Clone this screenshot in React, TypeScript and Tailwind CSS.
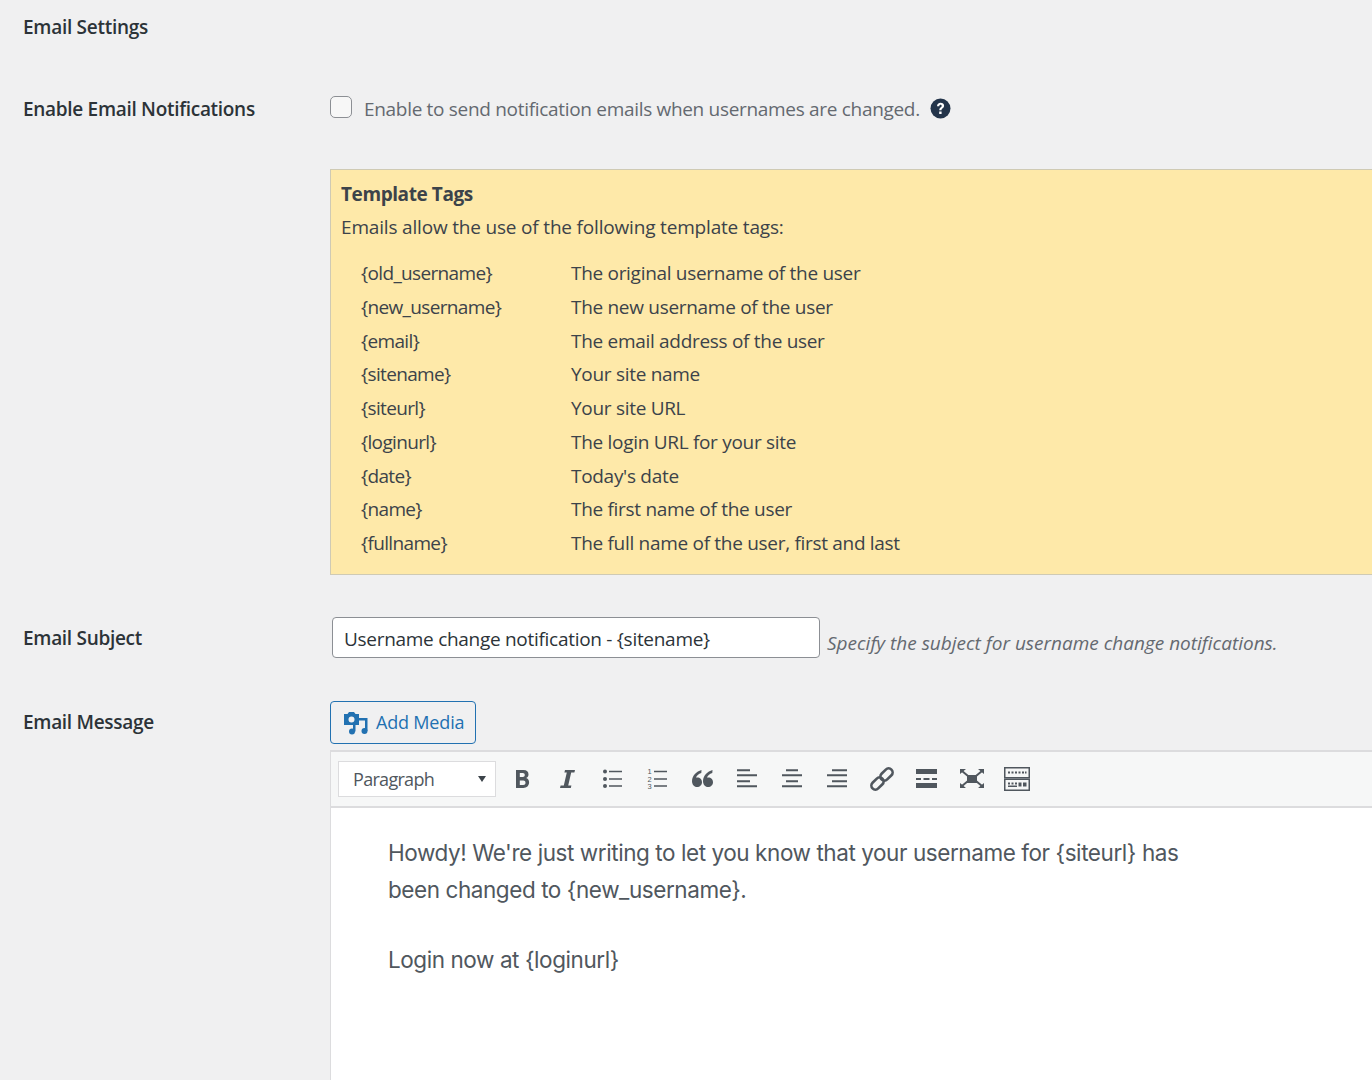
import React from 'react';

const tags = [
    ['{old_username}', 'The original username of the user'],
    ['{new_username}', 'The new username of the user'],
    ['{email}', 'The email address of the user'],
    ['{sitename}', 'Your site name'],
    ['{siteurl}', 'Your site URL'],
    ['{loginurl}', 'The login URL for your site'],
    ['{date}', "Today's date"],
    ['{name}', 'The first name of the user'],
    ['{fullname}', 'The full name of the user, first and last'],
];

const Icon = ({ children }: { children: React.ReactNode }) => (
    <div className="w-[45px] h-[36px] flex items-center justify-center">
        <svg width="26" height="26" viewBox="0 0 26 26" fill="#50575e">
            {children}
        </svg>
    </div>
);

const Row = ({ label, children, className }: { label: string; children: React.ReactNode; className?: string }) => (
    <div className={`flex ${className ?? ''}`}>
        <div className="w-[307px] shrink-0 text-[19px] font-semibold text-[#2c3338] tracking-[-0.3px]">{label}</div>
        <div className="flex-1 min-w-0">{children}</div>
    </div>
);

export default function App() {
    return (
        <div className="w-[1372px] h-[1080px] overflow-hidden bg-[#f0f0f1] pl-[23px] font-['Open_Sans',sans-serif] text-[#3c434a]">
            <div className="h-[41px] pt-[12px] text-[19px] leading-[30px] font-semibold text-[#2c3338] tracking-[-0.28px]">Email Settings</div>

            <Row label="Enable Email Notifications" className="mt-[53px] h-[86px] leading-[30px]">
                <div className="flex items-center h-[30px]">
                    <div className="w-[22px] h-[22px] rounded-[5px] border border-[#8c8f94] bg-[#f7f7f7] -mt-[4px]" />
                    <span className="ml-[12px] text-[19px] text-[#646970] tracking-[-0.31px]">Enable to send notification emails when usernames are changed.</span>
                    <svg className="ml-[10px] -mt-[2px]" width="21" height="21" viewBox="0 0 21 21">
                        <circle cx="10.5" cy="10.5" r="10" fill="#23344a" />
                        <path d="M7 8.2c0-2.2 1.6-3.4 3.6-3.4s3.5 1.2 3.5 3c0 2.6-2.6 2.4-2.6 4.4H9.3c0-3 2.4-2.9 2.4-4.3 0-.7-.5-1.1-1.2-1.1-.8 0-1.2.6-1.2 1.4zM9.2 13.6h2.4V16H9.2z" fill="#fff" />
                    </svg>
                </div>
            </Row>

            <Row label="" className="h-[407px]">
                <div className="h-[406px] bg-[#fee9a9] border border-[#cfcab4] border-r-0 pl-[10px] pt-[8px] -mt-[11px] text-[#3c434a]">
                    <div className="text-[19px] leading-[32px] font-bold tracking-[-0.42px]">Template Tags</div>
                    <div className="text-[19px] leading-[34px] tracking-[-0.18px]">Emails allow the use of the following template tags:</div>
                    <div className="mt-[12.4px] pl-[20px]">
                        {tags.map(([tag, desc]) => (
                            <div key={tag} className="flex h-[33.75px] items-center text-[19px] tracking-[-0.3px]">
                                <div className="w-[210px] shrink-0 tracking-[-0.65px]">{tag}</div>
                                <div>{desc}</div>
                            </div>
                        ))}
                    </div>
                </div>
            </Row>

            <Row label="Email Subject" className="h-[77px] leading-[30px] mt-[36px]">
                <div className="flex items-center -mt-[6px]">
                    <div className="w-[488px] h-[41px] ml-[2px] rounded-[4px] border border-[#8c8f94] bg-white pl-[11px] pt-[2px] flex items-center text-[19px] text-[#2c3338] tracking-[-0.29px]">
                        Username change notification - {'{sitename}'}
                    </div>
                    <span className="ml-[7px] mt-[10px] text-[19px] italic text-[#646970]">Specify the subject for username change notifications.</span>
                </div>
            </Row>

            <Row label="Email Message" className="leading-[44px]">
                <div className="mt-[1px] w-[146px] h-[43px] rounded-[4px] border border-[#2271b1] flex items-center pl-[13px] text-[18px] text-[#2271b1] tracking-[-0.18px]">
                    <svg width="24" height="24" viewBox="0 0 24 24" fill="#2271b1">
                        <path fillRule="evenodd" d="M0 3h3.500L5 1h5l1.500 2H15v11H0zm7.500 2.500a3 3 0 100 6 3 3 0 000-6z" />
                        <path d="M15 7h8.500v13h-2.500V9.500h-6z" />
                        <circle cx="20.500" cy="20" r="3" />
                        <circle cx="8" cy="20.500" r="3" />
                        <path d="M9 14h2.500v6.500H9z" />
                    </svg>
                    <span className="ml-[8px] -mt-[2px]">Add Media</span>
                </div>
                <div className="mt-[6px] h-[400px] border-l border-[#dcdcde]">
                    <div className="h-[58px] border-y-[2px] border-[#dcdcde] bg-[#f6f7f7] pl-[7px] flex items-center">
                        <div className="w-[158px] h-[36px] border border-[#dcdcde] bg-white pl-[14px] pr-[9px] flex items-center justify-between text-[18px] text-[#50575e] tracking-[-0.7px]">
                            <span>Paragraph</span>
                            <span className="w-0 h-0 border-x-[4px] border-x-transparent border-t-[6px] border-t-[#3c434a]" />
                        </div>
                        <div className="ml-[3px] flex items-center">
                            {/* bold */}
                            <Icon><path fillRule="evenodd" d="M7 4h7.500c3.400 0 5 1.800 5 4.400 0 1.800-1 3.100-2.400 3.700 1.800.5 3 2 3 4.200 0 3.400-2.400 5.700-5.800 5.700H7zm3.800 3v4h3c1.200 0 2-.8 2-2s-.8-2-2-2zm0 7.500V19h3.500c1.300 0 2.200-.9 2.200-2.250s-.9-2.250-2.200-2.250z" /></Icon>
                            {/* italic */}
                            <Icon><path d="M11 4h10l-.6 2.500h-3.200l-3 13h3.200l-.6 2.500H6l.6-2.500h3.200l3-13H10.400z" /></Icon>
                            {/* bullets */}
                            <Icon>
                                <circle cx="6" cy="5.500" r="2" /><circle cx="6" cy="13" r="2" /><circle cx="6" cy="20" r="2" />
                                <path d="M10 4.700h13v1.600H10zM10 12.200h13v1.600H10zM10 19.200h13v1.600H10z" />
                            </Icon>
                            {/* numbers */}
                            <Icon>
                                <text x="3.500" y="8" fontSize="7.500" fontFamily="Liberation Sans">1</text>
                                <text x="3.500" y="15.500" fontSize="7.500" fontFamily="Liberation Sans">2</text>
                                <text x="3.500" y="22.500" fontSize="7.500" fontFamily="Liberation Sans">3</text>
                                <path d="M10 4.700h13v1.600H10zM10 12.200h13v1.600H10zM10 19.200h13v1.600H10z" />
                            </Icon>
                            {/* quote */}
                            <Icon>
                                <path d="M12.500 4c-5 1.500-9.500 5.500-9.500 11 0 3.400 2 6 5 6s5-2.200 5-4.800-2-4.700-4.700-4.700c-.5 0-1 0-1.300.2.500-2 2.500-3.700 5.300-4.700z" />
                                <path d="M23.500 4c-5 1.500-9.500 5.500-9.500 11 0 3.400 2 6 5 6s5-2.200 5-4.800-2-4.700-4.700-4.700c-.5 0-1 0-1.300.2.500-2 2.500-3.700 5.300-4.700z" />
                            </Icon>
                            {/* align left */}
                            <Icon><path d="M3 3.300h13v2H3zM3 8.300h20v2H3zM3 14.300h13v2H3zM3 19.300h20v2H3z" /></Icon>
                            {/* align center */}
                            <Icon><path d="M7 3.300h12v2H7zM3 8.300h20v2H3zM7 14.300h12v2H7zM3 19.300h20v2H3z" /></Icon>
                            {/* align right */}
                            <Icon><path d="M8 3.300h15v2H8zM3 8.300h20v2H3zM8 14.300h15v2H8zM3 19.300h20v2H3z" /></Icon>
                            {/* link */}
                            <Icon>
                                <g fill="none" stroke="#50575e" strokeWidth="2.600">
                                    <rect x="1.500" y="13.500" width="14" height="8" rx="4" transform="rotate(-45 8.500 17.500)" />
                                    <rect x="10.500" y="4.500" width="14" height="8" rx="4" transform="rotate(-45 17.500 8.500)" />
                                </g>
                            </Icon>
                            {/* read more */}
                            <Icon><path d="M2 3h21v5H2zM2 12h5v2H2zM9.500 12h6v2h-6zM18 12h5v2h-5zM2 17h21v5H2z" /></Icon>
                            {/* fullscreen */}
                            <Icon>
                                <path d="M8 9h10v8H8z" />
                                <path d="M1 3h6L1 8zM25 3h-6l6 5zM1 22h6l-6-5zM25 22h-6l6-5z" />
                                <path d="M3 5l6 5M23 5l-6 5M3 20l6-5M23 20l-6-5" stroke="#50575e" strokeWidth="2" />
                            </Icon>
                            {/* toolbar toggle */}
                            <Icon>
                                <g fill="none" stroke="#50575e" strokeWidth="1.500">
                                    <rect x=".75" y="1.750" width="24.500" height="10" />
                                    <rect x=".75" y="13.250" width="24.500" height="11" />
                                </g>
                                <path d="M4 5.500h2v2H4zM7.500 5.500h2v2h-2zM11 5.500h2v2h-2zM14.500 5.500h2v2h-2zM18 5.500h2v2h-2zM21 5.500h1.500v2H21z" />
                                <path d="M4 16.500h2v2H4zM7.500 16.500h2v2h-2zM11 16.500h2v2h-2zM14.500 16.500h3v4h-3zM19 16.500h3.500v4H19zM4 19.500h9v1.500H4z" />
                            </Icon>
                        </div>
                    </div>
                    <div className="h-[340px] bg-white pl-[57px] pt-[26px] font-['Inter',sans-serif] text-[22.5px] leading-[37px] text-[#50575e] tracking-[-0.43px]">
                        <p>Howdy! We're just writing to let you know that your username for {'{siteurl}'} has</p>
                        <p>been changed to {'{new_username}'}.</p>
                        <p className="mt-[33px]">Login now at {'{loginurl}'}</p>
                    </div>
                </div>
            </Row>
        </div>
    );
}
